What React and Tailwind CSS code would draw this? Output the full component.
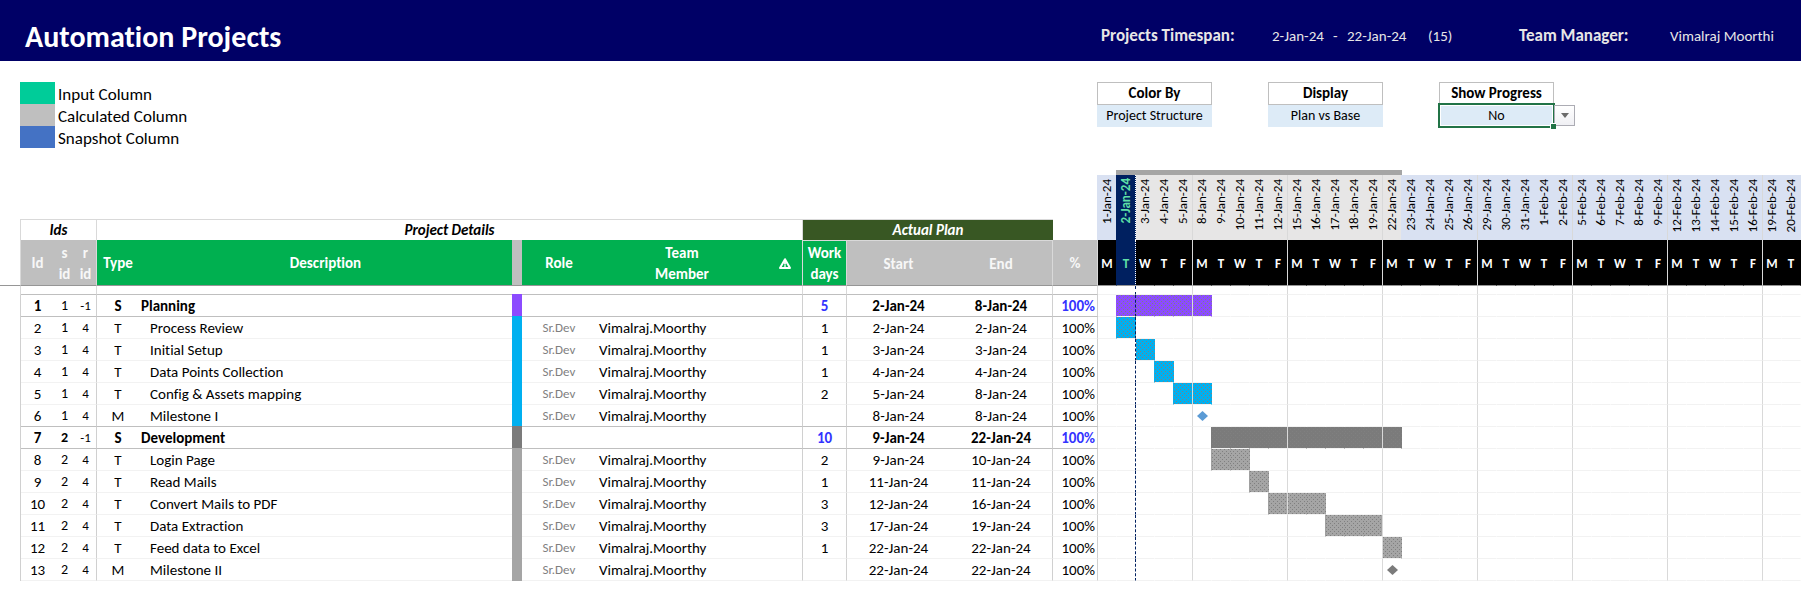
import { clsx } from "clsx";

const DATES = [
  "1-Jan-24", "2-Jan-24", "3-Jan-24", "4-Jan-24", "5-Jan-24",
  "8-Jan-24", "9-Jan-24", "10-Jan-24", "11-Jan-24", "12-Jan-24",
  "15-Jan-24", "16-Jan-24", "17-Jan-24", "18-Jan-24", "19-Jan-24",
  "22-Jan-24", "23-Jan-24", "24-Jan-24", "25-Jan-24", "26-Jan-24",
  "29-Jan-24", "30-Jan-24", "31-Jan-24", "1-Feb-24", "2-Feb-24",
  "5-Feb-24", "6-Feb-24", "7-Feb-24", "8-Feb-24", "9-Feb-24",
  "12-Feb-24", "13-Feb-24", "14-Feb-24", "15-Feb-24", "16-Feb-24",
  "19-Feb-24", "20-Feb-24",
];
const WEEKDAYS = ["M", "T", "W", "T", "F"];
const TODAY = 1;
const SPAN_END = 15;

// bar: [first day index, last day index]; milestones carry a single day
const TASKS = [
  { id: 1, s: 1, r: -1, type: "S", name: "Planning", days: 5, start: "2-Jan-24", end: "8-Jan-24", tone: "purple", bar: [1, 5] },
  { id: 2, s: 1, r: 4, type: "T", name: "Process Review", days: 1, start: "2-Jan-24", end: "2-Jan-24", tone: "sky", bar: [1, 1] },
  { id: 3, s: 1, r: 4, type: "T", name: "Initial Setup", days: 1, start: "3-Jan-24", end: "3-Jan-24", tone: "sky", bar: [2, 2] },
  { id: 4, s: 1, r: 4, type: "T", name: "Data Points Collection", days: 1, start: "4-Jan-24", end: "4-Jan-24", tone: "sky", bar: [3, 3] },
  { id: 5, s: 1, r: 4, type: "T", name: "Config & Assets mapping", days: 2, start: "5-Jan-24", end: "8-Jan-24", tone: "sky", bar: [4, 5] },
  { id: 6, s: 1, r: 4, type: "M", name: "Milestone I", days: "", start: "8-Jan-24", end: "8-Jan-24", tone: "sky", milestone: 5 },
  { id: 7, s: 2, r: -1, type: "S", name: "Development", days: 10, start: "9-Jan-24", end: "22-Jan-24", tone: "dark", bar: [6, 15] },
  { id: 8, s: 2, r: 4, type: "T", name: "Login Page", days: 2, start: "9-Jan-24", end: "10-Jan-24", tone: "gray", bar: [6, 7] },
  { id: 9, s: 2, r: 4, type: "T", name: "Read Mails", days: 1, start: "11-Jan-24", end: "11-Jan-24", tone: "gray", bar: [8, 8] },
  { id: 10, s: 2, r: 4, type: "T", name: "Convert Mails to PDF", days: 3, start: "12-Jan-24", end: "16-Jan-24", tone: "gray", bar: [9, 11] },
  { id: 11, s: 2, r: 4, type: "T", name: "Data Extraction", days: 3, start: "17-Jan-24", end: "19-Jan-24", tone: "gray", bar: [12, 14] },
  { id: 12, s: 2, r: 4, type: "T", name: "Feed data to Excel", days: 1, start: "22-Jan-24", end: "22-Jan-24", tone: "gray", bar: [15, 15] },
  { id: 13, s: 2, r: 4, type: "M", name: "Milestone II", days: "", start: "22-Jan-24", end: "22-Jan-24", tone: "gray", milestone: 15 },
];

const STRIP_FILL = { purple: "bg-[#8c4bff]", sky: "bg-[#00b0f0]", dark: "bg-[#7b7b7b]", gray: "bg-[#a5a5a5]" };
const STRIP_LINE = { purple: "border-b-[#8c4bff]", sky: "border-b-[#00b0f0]", dark: "border-b-[#7b7b7b]", gray: "border-b-[#a5a5a5]" };
const BAR_EDGE = { purple: "border-r-[#8c4bff]", sky: "border-r-[#0aaeea]", dark: "border-r-[#7b7b7b]", gray: "border-r-[#a0a0a0]" };
const DOTS = "[background-size:4px_4px] [background-position:0_0,2px_2px]";
const BAR_DOTS = {
  purple: "bg-[#8c4bff] [background-image:conic-gradient(at_1px_1px,transparent_270deg,#808080_0),conic-gradient(at_1px_1px,transparent_270deg,#808080_0)]",
  sky: "bg-[#00b0f0] [background-image:conic-gradient(at_1px_1px,transparent_270deg,#808080_0),conic-gradient(at_1px_1px,transparent_270deg,#808080_0)]",
  dark: "bg-[#7b7b7b] [background-image:conic-gradient(at_1px_1px,transparent_270deg,#808080_0),conic-gradient(at_1px_1px,transparent_270deg,#808080_0)]",
  gray: "bg-[#a5a5a5] [background-image:conic-gradient(at_1px_1px,transparent_270deg,#808080_0),conic-gradient(at_1px_1px,transparent_270deg,#808080_0)]",
};

const isWeekEnd = (i) => i % 5 === 4;

function Header() {
  return (
    <header className="flex h-[61px] items-center bg-[#000066] text-[#e7e6e6]">
      <h1 className="flex-1 pt-3 pl-[25px] text-[30px] leading-9 font-bold text-white">Automation Projects</h1>
      <dl className="flex w-[703px] items-center pt-[10px] pl-[3px] text-[15px] leading-6 whitespace-nowrap">
        <dt className="w-[171px] text-[17px] font-bold">Projects Timespan:</dt>
        <dd className="flex w-[247px]">
          <span className="w-[61px]">2-Jan-24</span>
          <span className="w-[14px]">-</span>
          <span className="w-[81px]">22-Jan-24</span>
          <span>(15)</span>
        </dd>
        <dt className="w-[151px] text-[17px] font-bold">Team Manager:</dt>
        <dd>Vimalraj Moorthi</dd>
      </dl>
    </header>
  );
}

function LegendItem({ color, label }) {
  return (
    <li className="flex h-[22px] items-stretch gap-[3px]">
      <span className={clsx("w-[35px]", color)} />
      <span className="pt-[2px] leading-[22px]">{label}</span>
    </li>
  );
}

function Picker({ id, label, value, options, active }) {
  return (
    <div className="flex w-[115px] flex-col">
      <label htmlFor={id} className="flex h-[23px] items-center justify-center border border-[#bfbfbf] pb-px text-[15px] leading-5 font-bold">
        {label}
      </label>
      <div className={clsx("relative flex", active && "z-10 -mt-px")}>
        <select
          id={id}
          defaultValue={value}
          className={clsx(
            "w-[115px] shrink-0 appearance-none bg-[#ddebf7] text-center text-[14px] leading-5 [text-align-last:center]",
            active ? "h-[23px] border-2 border-white outline-2 -outline-offset-1 outline-[#217346]" : "h-[22px]",
          )}
        >
          {options.map((o) => (
            <option key={o}>{o}</option>
          ))}
        </select>
        {active && (
          <>
            <button
              type="button"
              aria-label="Open list"
              className="mt-px flex h-[21px] w-[21px] shrink-0 items-center justify-center border border-[#acacb4] bg-linear-to-b from-white to-[#f0f0f4]"
            >
              <svg width="8" height="5" viewBox="0 0 8 5" aria-hidden="true">
                <path d="M0 0h8L4 5z" fill="#6b6b6b" />
              </svg>
            </button>
            <span className="absolute top-[19px] left-[111px] size-[6px] border-t border-l border-white bg-[#217346]" />
          </>
        )}
      </div>
    </div>
  );
}

function WarningIcon() {
  return (
    <svg className="mx-auto" width="12" height="11" viewBox="0 0 12 11" role="img" aria-label="Warning">
      <path d="M6 1.2 11 10H1z" fill="none" stroke="#fff" strokeWidth="2" strokeLinejoin="round" />
      <path d="M6 3.5v3M6 7.3v1.5" stroke="#fff" strokeWidth="1.8" />
    </svg>
  );
}

function DateHeads() {
  return DATES.map((date, i) => {
    const inSpan = i > TODAY && i <= SPAN_END;
    return (
      <th
        key={date}
        rowSpan={2}
        scope="col"
        className={clsx(
          "border-r align-top text-[13px] leading-[17px]",
          i === TODAY ? "bg-[#002060] pt-[3px] font-bold text-[#5fe0a8]" : "pt-1 font-normal",
          i !== TODAY && (inSpan ? "bg-[#e7e6e6]" : "bg-[#d9e1f2]"),
          i === TODAY && "border-dotted border-r-white",
          i === TODAY - 1 && "border-r-[#002060]",
          isWeekEnd(i) && "border-r-[#d9d9d9]",
          i !== TODAY && i !== TODAY - 1 && !isWeekEnd(i) && (i === SPAN_END ? "border-r-[#d9e1f2]" : "border-r-transparent"),
        )}
      >
        <span className="mx-auto block w-[17px] rotate-180 [writing-mode:vertical-rl]">{date}</span>
      </th>
    );
  });
}

function DayCell({ task, index }) {
  const [from, to] = task.bar ?? [-9, -9];
  const filled = index >= from && index <= to;
  return (
    <td
      className={clsx(
        "border-r border-b border-b-[#f2f2f2]",
        filled && [BAR_DOTS[task.tone], DOTS],
        index === TODAY && "border-r-[#002060] [border-right-style:dashed]",
        isWeekEnd(index) && "border-r-[#d9d9d9]",
        index !== TODAY && !isWeekEnd(index) && (index === from - 1 ? BAR_EDGE[task.tone] : "border-r-transparent"),
      )}
    >
      {task.milestone === index && (
        <svg className="mx-auto" width="11" height="10" viewBox="0 0 11 10" role="img" aria-label="Milestone">
          <path d="M5.5 0 11 5 5.5 10 0 5z" className={task.tone === "sky" ? "fill-[#5b9bd5]" : "fill-[#7b7b7b]"} />
        </svg>
      )}
    </td>
  );
}

function TaskRow({ task, next }) {
  const section = task.type === "S";
  const line = section || next?.type === "S" ? "border-b border-b-[#bfbfbf]" : "border-b border-b-[#f2f2f2]";
  const right = "border-r border-r-[#d0d0d0]";
  return (
    <tr className="h-[22px]">
      <td className={right} />
      <td className={clsx(line, "text-center", section && "font-bold")}>{task.id}</td>
      <td className={clsx(line, "text-center text-[14px]", section && task.id > 1 && "font-bold")}>{task.s}</td>
      <td className={clsx(line, right, "text-center text-[13px]")}>{task.r}</td>
      <td className={clsx(line, "text-center", section && "font-bold")}>{task.type}</td>
      <td className={clsx(line, section ? "pl-[2px] font-bold" : "pl-[11px]")}>{task.name}</td>
      <td className={clsx("border-b", STRIP_FILL[task.tone], STRIP_LINE[(next ?? task).tone])} />
      <td className={clsx(line, "text-center text-[13px] text-[#7f7f7f]")}>{!section && "Sr.Dev"}</td>
      <td className={clsx(line, "pl-[3px]")}>{!section && "Vimalraj.Moorthy"}</td>
      <td className={clsx(line, right)} />
      <td className={clsx(line, right, "text-center", section && "font-bold text-[#3333ff]")}>{task.days}</td>
      <td className={clsx(line, "text-center", section && "font-bold")}>{task.start}</td>
      <td className={clsx(line, right, "text-center", section && "font-bold")}>{task.end}</td>
      <td className={clsx(line, right, "pr-[2px] text-right", section && "font-bold text-[#3333ff]")}>100%</td>
      {DATES.map((d, i) => (
        <DayCell key={d} task={task} index={i} />
      ))}
    </tr>
  );
}

function PlanTable() {
  const foot = "border-b border-b-[#969696] pt-[2px]";
  const green = clsx(foot, "bg-[#00b050] text-white");
  const gray = clsx(foot, "bg-[#bfbfbf] text-[#f7f7f7]");
  const side = "border-r border-r-[#d9d9d9]";
  const cap = "border-t border-t-[#d9d9d9]";
  return (
    <table className="w-full min-w-[1600px] table-fixed border-separate border-spacing-0 text-[15px] leading-5 whitespace-nowrap">
      <colgroup>
        <col className="w-[21px]" />
        <col className="w-[33px]" />
        <col className="w-[21px]" />
        <col className="w-[22px]" />
        <col className="w-[42px]" />
        <col />
        <col className="w-[10px]" />
        <col className="w-[74px]" />
        <col className="w-[172px]" />
        <col className="w-[35px]" />
        <col className="w-[44px]" />
        <col className="w-[103px]" />
        <col className="w-[103px]" />
        <col className="w-[45px]" />
        {DATES.map((d) => (
          <col key={d} className="w-[19px]" />
        ))}
      </colgroup>
      <thead>
        <tr className="h-[5px]">
          <td colSpan={14} />
          {DATES.map((d, i) => (
            <td
              key={d}
              className={clsx(
                "border-r",
                i >= TODAY && i <= SPAN_END && "bg-[#a5a5a5]",
                i === TODAY - 1 ? "border-r-[#a5a5a5]" : "border-r-transparent",
              )}
            />
          ))}
        </tr>
        <tr className="h-[44px]">
          <td colSpan={14} className="border-r border-r-[#d9e1f2]" />
          <DateHeads />
        </tr>
        <tr className="h-[21px] italic">
          <td className={side} />
          <th colSpan={3} scope="colgroup" className={clsx(cap, side)}>Ids</th>
          <th colSpan={6} scope="colgroup" className={clsx(cap, side)}>Project Details</th>
          <th colSpan={3} scope="colgroup" className={clsx(cap, "bg-[#385723] text-white")}>Actual Plan</th>
          <td className="border-r border-r-[#d9e1f2]" />
        </tr>
        <tr className="h-[46px] leading-[21px]">
          <td className={clsx(foot, side)} />
          <th scope="col" className={gray}>Id</th>
          <th scope="col" className={gray}>s<br />id</th>
          <th scope="col" className={clsx(gray, side)}>r<br />id</th>
          <th scope="col" className={green}>Type</th>
          <th scope="col" className={green}>Description</th>
          <td className={gray} />
          <th scope="col" className={green}>Role</th>
          <th scope="col" className={green}>Team<br />Member</th>
          <th scope="col" className={clsx(green, side)}><WarningIcon /></th>
          <th scope="col" className={clsx(green, side, cap)}>Work<br />days</th>
          <th scope="col" className={clsx(gray, cap)}>Start</th>
          <th scope="col" className={clsx(gray, cap, side)}>End</th>
          <th scope="col" className={clsx(gray, side)}>%</th>
          {DATES.map((d, i) => (
            <th
              key={d}
              className={clsx(
                foot,
                "border-r text-[13px]",
                i === TODAY ? "bg-[#002060] text-[#5fe0a8] border-r-white [border-right-style:dotted]" : "bg-black text-white",
                i === TODAY - 1 && "border-r-[#002060]",
                isWeekEnd(i) && "border-r-[#d9d9d9]",
                i !== TODAY && i !== TODAY - 1 && !isWeekEnd(i) && "border-r-black",
              )}
            >
              {WEEKDAYS[i % 5]}
            </th>
          ))}
        </tr>
      </thead>
      <tbody>
        <tr className="h-[9px]">
          <td className={side} />
          <td colSpan={3} className={clsx(side, "border-b border-b-[#bfbfbf]")} />
          <td colSpan={2} className="border-b border-b-[#bfbfbf]" />
          <td className="border-b border-b-[#8c4bff]" />
          <td colSpan={3} className={clsx(side, "border-b border-b-[#bfbfbf]")} />
          <td className={clsx(side, "border-b border-b-[#bfbfbf]")} />
          <td colSpan={2} className={clsx(side, "border-b border-b-[#bfbfbf]")} />
          <td className={clsx(side, "border-b border-b-[#bfbfbf]")} />
          {DATES.map((d, i) => (
            <DayCell key={d} task={{}} index={i} />
          ))}
        </tr>
        {TASKS.map((t, i) => (
          <TaskRow key={t.id} task={t} next={TASKS[i + 1]} />
        ))}
      </tbody>
    </table>
  );
}

export default function App() {
  return (
    <div className="min-h-screen overflow-x-auto bg-white font-['Carlito','Calibri','Lato',sans-serif] text-black [font-variant-ligatures:none]">
      <Header />
      <main>
        <section className="flex h-[109px] items-start justify-between pt-[21px] pl-5">
          <ul className="text-[17px]">
            <LegendItem color="bg-[#00cc99]" label="Input Column" />
            <LegendItem color="bg-[#bfbfbf]" label="Calculated Column" />
            <LegendItem color="bg-[#4472c4]" label="Snapshot Column" />
          </ul>
          <form className="flex w-[704px] gap-14">
            <Picker id="color-by" label="Color By" value="Project Structure" options={["Project Structure", "Team Member"]} />
            <Picker id="display" label="Display" value="Plan vs Base" options={["Plan vs Base", "Plan"]} />
            <Picker id="show-progress" label="Show Progress" value="No" options={["Yes", "No"]} active />
          </form>
        </section>
        <PlanTable />
      </main>
    </div>
  );
}
